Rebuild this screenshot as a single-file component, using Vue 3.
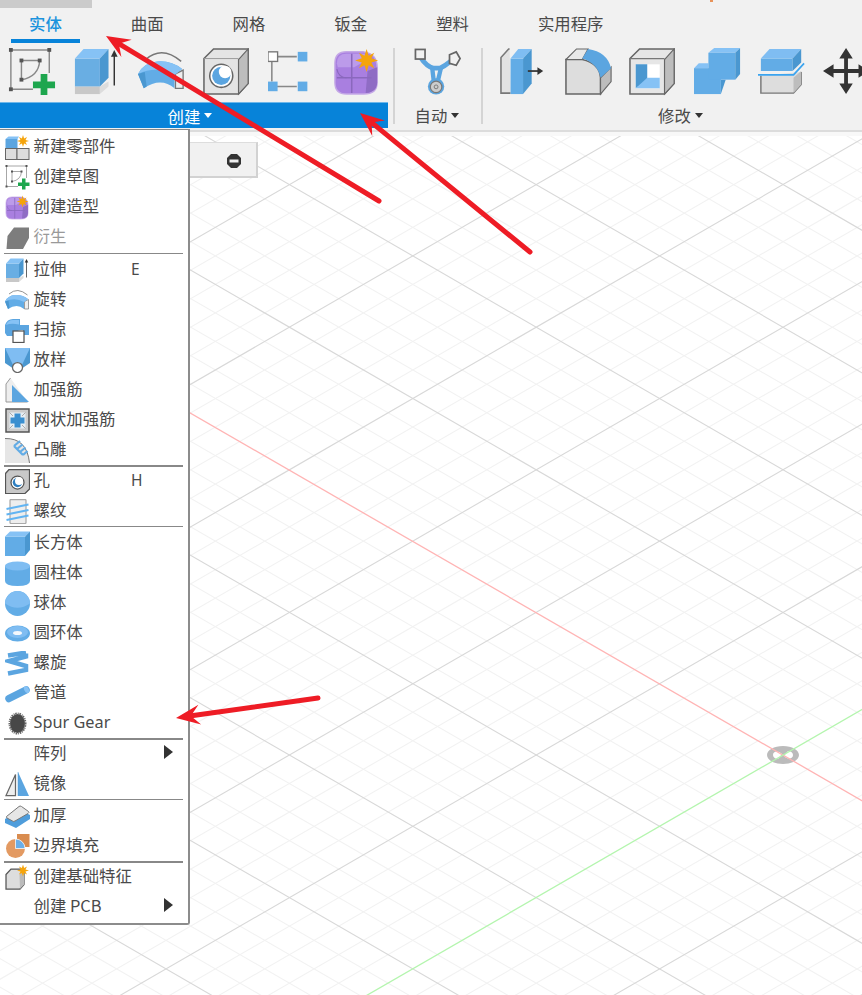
<template>
  <div class="app">
    <svg class="defs" width="0" height="0">
      <defs>
        <polygon id="star" points="0,-12 2.2,-5 8,-8 5,-2.2 12,0 5,2.2 8,8 2.2,5 0,12 -2.2,5 -8,8 -5,2.2 -12,0 -5,-2.2 -8,-8 -2.2,-5" fill="#f5a40c"/>
        <symbol id="sketch" viewBox="0 0 50 50">
          <path d="M3 2H43V26M3 2V43H26" fill="none" stroke="#8a8a8a" stroke-width="1.5"/>
          <path d="M14 13H33M14 13V33M33 13Q32 30 14 33" fill="none" stroke="#888" stroke-width="1.5"/>
          <g fill="#555"><rect x="1" y="0" width="4" height="4"/><rect x="41" y="0" width="4" height="4"/><rect x="1" y="41" width="4" height="4"/><rect x="12" y="11" width="4" height="4"/><rect x="31" y="11" width="4" height="4"/><rect x="12" y="31" width="4" height="4"/></g>
          <path d="M34 27h7v8h8v7h-8v7h-7v-7h-8v-7h8z" fill="#1ea64e"/>
        </symbol>
        <symbol id="extrude" viewBox="0 0 50 50">
          <path d="M2 40H28V48H2z" fill="#c8c8c8"/>
          <path d="M28 40L37 35V40L28 48z" fill="#dcdcdc"/>
          <path d="M2 11H28V40H2z" fill="#69aee3"/>
          <path d="M2 11L11 1H37L28 11z" fill="#86c2f5"/>
          <path d="M28 11L37 1V31L28 40z" fill="#4a97d0"/>
          <path d="M43 39V6" stroke="#333" stroke-width="1.5"/><path d="M43 2L46.500 9H39.500z" fill="#333"/>
        </symbol>
        <symbol id="revolve" viewBox="0 0 50 50">
          <path d="M8 12Q25 -3 45 14" fill="none" stroke="#777" stroke-width="1.6"/>
          <path d="M39 27L47 23V42H39z" fill="#eee" stroke="#777" stroke-width="1.4"/>
          <path d="M0 27Q6 15 20 14Q35 13 46 22L38 28V42Q24 30 6 42z" fill="#62ace6"/>
          <path d="M0 27Q6 15 20 14Q35 13 46 22L38 28Q20 18 0 27z" fill="#86c2f5"/>
          <path d="M0 27L6 42L9 40L7 25z" fill="#4a97d0"/>
        </symbol>
        <symbol id="hole" viewBox="0 0 50 50">
          <path d="M1 11L11 1H47V37L37 48H1z" fill="#e4e4e4" stroke="#666" stroke-width="1.6"/>
          <path d="M37 12L47 1V37L37 48z" fill="#bdbdbd" stroke="#666" stroke-width="1.2"/>
          <path d="M1 11H37" fill="none" stroke="#999" stroke-width="1"/>
          <circle cx="19" cy="29" r="12" fill="#fff" stroke="#666" stroke-width="1.6"/>
          <circle cx="19" cy="29" r="9.500" fill="#5ba5e0"/>
          <circle cx="23" cy="25" r="6.500" fill="#fff"/>
        </symbol>
        <symbol id="params" viewBox="0 0 50 50">
          <path d="M9 9H30M4 14V35M9 40H30" stroke="#888" stroke-width="1.6" fill="none"/>
          <rect x="0" y="4" width="10" height="10" fill="#fff" stroke="#777" stroke-width="1.4"/>
          <rect x="31" y="4" width="10" height="10" fill="#62ace6"/>
          <rect x="0" y="35" width="10" height="10" fill="#62ace6"/>
          <rect x="31" y="35" width="10" height="10" fill="#62ace6"/>
        </symbol>
        <symbol id="form" viewBox="-2 0 50 50">
          <path d="M0 16Q0 4 12 4H30Q44 6 44 20V36Q44 48 30 48H12Q0 48 0 36z" fill="#a97fe0" stroke="#c4a8e6" stroke-width="1.500"/>
          <path d="M2 16Q2 6 12 6H30Q34 6 38 10L20 20H3z" fill="#bc9bea"/>
          <path d="M34 24L44 20V36Q44 46 32 47z" fill="#8f6cc4"/>
          <path d="M17.500 6V47M2 31H38" stroke="#8a68bd" stroke-width="1.600"/>
          <path d="M2 22Q4 31 12 31" fill="none" stroke="#8a68bd" stroke-width="1.200"/>
          <use href="#star" x="33" y="13"/>
        </symbol>
        <symbol id="auto" viewBox="0 0 50 50">
          <path d="M7 10Q13 19 20 21H27Q32 19 38 14" fill="none" stroke="#5ba5e0" stroke-width="5"/>
          <path d="M19 21L21 38M28 21L24 38" fill="none" stroke="#5ba5e0" stroke-width="4.500"/>
          <rect x="1.500" y="1.500" width="10" height="10" fill="#f1f1f1" stroke="#666" stroke-width="1.800"/>
          <path d="M37 7L44 4L48 11L44 18L37 16z" fill="#f1f1f1" stroke="#666" stroke-width="1.800"/>
          <circle cx="23" cy="40" r="8.500" fill="#5ba5e0"/>
          <circle cx="23" cy="40.500" r="6" fill="#ccc" stroke="#777" stroke-width="1.200"/>
          <circle cx="23" cy="40.500" r="2" fill="none" stroke="#777" stroke-width="1"/>
        </symbol>
        <symbol id="press" viewBox="0 0 50 50">
          <path d="M10 1H9L1 10V47H11" fill="#e2e2e2" stroke="#777" stroke-width="1.600"/>
          <path d="M11 11H24V48H11z" fill="#62ace6"/>
          <path d="M11 11L19 1H33L24 11z" fill="#7fbdf2"/>
          <path d="M24 11L33 1V37L24 48z" fill="#4a97d0"/>
          <path d="M29 24H41" stroke="#333" stroke-width="1.800"/><path d="M45 24L39 20V28z" fill="#333"/>
        </symbol>
        <symbol id="fillet" viewBox="0 0 50 50">
          <path d="M1 48V12H18Q36 16 37 31V48z" fill="#ddd" stroke="#666" stroke-width="1.600"/>
          <path d="M1 12L12 1H24L18 12z" fill="#e8e8e8" stroke="#666" stroke-width="1.200"/>
          <path d="M37 31L48 20V35L37 48z" fill="#bdbdbd" stroke="#666" stroke-width="1.200"/>
          <path d="M18 11L24 1Q44 4 48 21L37 31Q34 16 18 11z" fill="#5ba5e0"/>
        </symbol>
        <symbol id="shell" viewBox="0 0 50 50">
          <path d="M1 11L11 1H47V37L37 48H1z" fill="#e6e6e6" stroke="#666" stroke-width="1.600"/>
          <path d="M37 12L47 1V37L37 48z" fill="#bdbdbd" stroke="#666" stroke-width="1.200"/>
          <path d="M1 11H37" stroke="#777" stroke-width="1.200"/>
          <rect x="7" y="17" width="25" height="25" fill="#fff"/>
          <path d="M7 17H19V33L7 42z" fill="#4a97d0"/>
          <path d="M7 42L19 31H32V42z" fill="#86c2f5"/>
        </symbol>
        <symbol id="combine" viewBox="0 0 50 50">
          <path d="M0 21L5 16H15V21z" fill="#86c2f5"/>
          <path d="M0 21H28V48H0z" fill="#62ace6"/>
          <path d="M28 33H33L28 48z" fill="#4a97d0"/>
          <path d="M15 5L21 0H48L43 5z" fill="#86c2f5"/>
          <path d="M15 5H43V33H15z" fill="#62ace6"/>
          <path d="M43 5L48 0V27L43 33z" fill="#4a97d0"/>
        </symbol>
        <symbol id="split" viewBox="0 0 50 50">
          <path d="M3 29V47H37L45 38V25" fill="#ddd" stroke="#777" stroke-width="1.500"/>
          <path d="M37 31L45 24V38L37 47z" fill="#bdbdbd"/>
          <path d="M3 11H36V24H3z" fill="#62ace6"/>
          <path d="M3 11L12 1H45L36 11z" fill="#7fbdf2"/>
          <path d="M36 11L45 1V15L36 24z" fill="#4a97d0"/>
          <path d="M0 28H37L48 16" fill="none" stroke="#3ba4ef" stroke-width="1.800"/>
        </symbol>
        <symbol id="move" viewBox="0 0 50 50">
          <path d="M24 0L31 11H26V22H37V17L48 24L37 31V26H26V37H31L24 48L17 37H22V26H11V31L0 24L11 17V22H22V11H17z" fill="#333"/>
        </symbol>
        <symbol id="comp" viewBox="0 0 50 50">
          <path d="M1 8H25V27H1z" fill="#5ba5e0"/><path d="M1 8L7 3H28L25 8z" fill="#86c2f5"/>
          <rect x="1" y="27" width="23" height="22" fill="#ddd" stroke="#666" stroke-width="2"/>
          <rect x="24" y="27" width="24" height="22" fill="#ddd" stroke="#666" stroke-width="2"/>
          <use href="#star" x="36" y="12"/>
        </symbol>
        <symbol id="derive" viewBox="0 0 50 50">
          <path d="M3 48L5 22L18 5H48V26L36 48z" fill="#7d7d7d"/>
        </symbol>
        <symbol id="sweep" viewBox="0 0 50 50">
          <path d="M0 30V14Q4 2 16 2H30V14H48V34H36V24Q22 22 16 36H4z" fill="#5ba5e0"/>
          <path d="M2 14Q6 4 16 4H28V13Q12 10 2 14z" fill="#86c2f5"/>
          <rect x="16" y="26" width="22" height="23" fill="#fff" stroke="#555" stroke-width="2.500"/>
        </symbol>
        <symbol id="loft" viewBox="0 0 50 50">
          <path d="M0 0H50V30L35 40H15L0 30z" fill="#4a97d0"/>
          <path d="M0 0H50L34 34H16z" fill="#7fbdf2"/>
          <circle cx="25" cy="39" r="10" fill="#fff" stroke="#666" stroke-width="2.500"/>
        </symbol>
        <symbol id="rib" viewBox="0 0 50 50">
          <path d="M11 0L2 12V48H45" fill="#eee" stroke="#999" stroke-width="2"/>
          <path d="M14 14L48 48H14z" fill="#5ba5e0"/>
        </symbol>
        <symbol id="web" viewBox="0 0 50 50">
          <rect x="2" y="2" width="46" height="46" fill="#ccc" stroke="#555" stroke-width="3"/>
          <rect x="9" y="9" width="32" height="32" fill="#e6eef4"/>
          <path d="M19 11H31V19H39V31H31V39H19V31H11V19H19z" fill="#3a8fd0"/>
          <path d="M9 9L16 16M41 9L34 16M9 41L16 34M41 41L34 34" stroke="#aaa" stroke-width="2"/>
        </symbol>
        <symbol id="emboss" viewBox="0 0 50 50">
          <path d="M0 1Q44 0 49 50H0z" fill="#e6e6e6"/>
          <path d="M0 1Q44 0 49 50" fill="none" stroke="#777" stroke-width="2"/>
          <path d="M18 16L30 6M18 16L36 34M24 22L35 13M30 28L41 19M36 34L45 26" stroke="#62ace6" stroke-width="4.500" fill="none"/>
        </symbol>
        <symbol id="hole2" viewBox="0 0 50 50">
          <path d="M8 1H49V40L40 49H1V9z" fill="#c8c8c8" stroke="#555" stroke-width="2.500"/>
          <circle cx="25" cy="27" r="13" fill="#fff" stroke="#555" stroke-width="2.500"/>
          <circle cx="25" cy="27" r="9.500" fill="#2f7fc0"/>
          <circle cx="28" cy="24" r="8" fill="#fff"/>
        </symbol>
        <symbol id="thread" viewBox="0 0 50 50">
          <rect x="10" y="1" width="32" height="48" rx="2" fill="#eee" stroke="#aaa" stroke-width="2.500"/>
          <path d="M3 20L47 11M3 31L47 22M3 42L47 33" stroke="#62b4f2" stroke-width="4"/>
        </symbol>
        <symbol id="box" viewBox="0 0 50 50">
          <path d="M0 11H40V50H0z" fill="#62ace6"/>
          <path d="M0 11L10 1H50L40 11z" fill="#86c2f5"/>
          <path d="M40 11L50 1V38L40 50z" fill="#4a97d0"/>
        </symbol>
        <symbol id="cyl" viewBox="0 0 50 50">
          <path d="M0 10V40Q0 50 25 50Q50 50 50 40V10z" fill="#62ace6"/>
          <ellipse cx="25" cy="10" rx="25" ry="9" fill="#7fbdf2"/>
        </symbol>
        <symbol id="sphere" viewBox="0 0 50 50">
          <circle cx="25" cy="25" r="25" fill="#62ace6"/>
          <path d="M0 25A25 25 0 0 1 50 25Q25 42 0 25z" fill="#7fbdf2"/>
        </symbol>
        <symbol id="torus" viewBox="0 0 50 50">
          <ellipse cx="25" cy="25" rx="25" ry="16" fill="#62ace6"/>
          <ellipse cx="25" cy="22" rx="21" ry="12" fill="#7fbdf2"/>
          <ellipse cx="25" cy="24" rx="9" ry="4" fill="#f4f8fc"/>
        </symbol>
        <symbol id="coil" viewBox="0 0 50 50">
          <path d="M6 9L42 3M42 5V11L8 20L42 30V38L6 45" fill="none" stroke="#5ba5e0" stroke-width="9"/>
        </symbol>
        <symbol id="pipe" viewBox="0 0 50 50">
          <path d="M8 35L42 18" stroke="#5ba5e0" stroke-width="15" stroke-linecap="round"/>
          <ellipse cx="43" cy="17" rx="4.500" ry="7.500" transform="rotate(-26 43 17)" fill="#86c2f5"/>
        </symbol>
        <symbol id="gear" viewBox="0 0 50 50">
          <ellipse cx="25" cy="25" rx="15" ry="19" fill="#484848"/>
          <ellipse cx="25" cy="25" rx="16" ry="20" fill="none" stroke="#666" stroke-width="4" stroke-dasharray="2 1.500 3 2"/>
        </symbol>
        <symbol id="mirror" viewBox="0 0 50 50">
          <path d="M21 5V47H2z" fill="#eee" stroke="#666" stroke-width="2.500"/>
          <path d="M26 0L48 48H26z" fill="#5ba5e0"/>
          <path d="M26 0V48" stroke="#4a97d0" stroke-width="1"/>
        </symbol>
        <symbol id="thicken" viewBox="0 0 50 50">
          <path d="M0 30L30 12L50 22V30L22 48L0 38z" fill="#4f9ddb"/>
          <path d="M3 25L28 5Q30 3 33 5L47 15Q49 17 46 19L20 34Q17 36 15 34L4 28Q2 26 3 25z" fill="#e6e6e6" stroke="#777" stroke-width="2"/>
        </symbol>
        <symbol id="boundary" viewBox="0 0 50 50">
          <path d="M24 0H49V26H24z" fill="#d98c4f"/>
          <circle cx="21" cy="29" r="19" fill="#e39a62"/>
          <path d="M21 29V10A19 19 0 0 1 40 29z" fill="#6aaee8" stroke="#fff" stroke-width="1.500"/>
        </symbol>
        <symbol id="base" viewBox="0 0 50 50">
          <path d="M2 19L12 8H38V39L30 48H2z" fill="#ddd" stroke="#555" stroke-width="2.500"/>
          <path d="M29 19L38 10V39L30 48z" fill="#bbb"/>
          <use href="#star" x="36" y="11"/>
        </symbol>
      </defs>
    </svg>

    <header class="toolbar">
      <div class="strip"><div class="strip-block"></div><div class="strip-dot"></div></div>
      <nav class="tabs">
        <div v-for="(t, i) in tabs" :key="t" class="tab" :class="{ active: i === 0 }">{{ t }}</div>
      </nav>
      <div class="groups">
        <section class="group create">
          <div class="tools">
            <svg v-for="x in createTools" :key="x" class="tool"><use :href="'#' + x" /></svg>
          </div>
          <div class="group-label">创建<i class="caret"></i></div>
        </section>
        <div class="vsep"></div>
        <section class="group auto">
          <div class="tools">
            <svg class="tool"><use href="#auto" /></svg>
          </div>
          <div class="group-label">自动<i class="caret"></i></div>
        </section>
        <div class="vsep"></div>
        <section class="group modify">
          <div class="tools">
            <svg v-for="x in modifyTools" :key="x" class="tool"><use :href="'#' + x" /></svg>
          </div>
          <div class="group-label">修改<i class="caret"></i></div>
        </section>
      </div>
    </header>

    <main class="stage">
      <svg class="grid" width="862" height="865" viewBox="0 130 862 865">
        <line v-for="(l, i) in gridLines" :key="i" :x1="l.x1" :y1="l.y1" :x2="l.x2" :y2="l.y2" :stroke="l.color" stroke-width="1.100" />
        <path d="M783 746C792 746 799 750 799 755C799 760 792 764 783 764C774 764 767 760 767 755C767 750 774 746 783 746zM782 754C778 750 773 751 773 755C773 757 775 759 778 759zM784 756C788 760 793 759 793 755C793 753 791 751 788 751z" fill="#bbb" fill-rule="evenodd" />
        <line x1="-1" y1="302.600" x2="1783" y2="1332.300" stroke="#ffb4b4" stroke-width="1.300" />
        <line x1="-217" y1="1332.300" x2="1567" y2="302.600" stroke="#b4f5ae" stroke-width="1.300" />
      </svg>
      <div class="browser-panel">
        <svg width="16" height="16" viewBox="0 0 16 16"><path d="M5 1H11L15 5V11L11 15H5L1 11V5z" fill="#333"/><rect x="3.500" y="6.500" width="9" height="3" fill="#eee"/></svg>
      </div>
    </main>

    <aside class="menu">
      <template v-for="(m, i) in menu" :key="i">
        <div v-if="m.sep" class="menu-sep" :class="m.sep"></div>
        <div v-else class="menu-row" :class="{ off: m.off }">
          <svg class="menu-icon"><use v-if="m.i" :href="'#' + m.i" /></svg>
          <span class="menu-text" :class="{ latin: m.latin }">{{ m.t }}</span>
          <span v-if="m.k" class="menu-key">{{ m.k }}</span>
          <i v-if="m.sub" class="menu-sub"></i>
        </div>
      </template>
    </aside>

    <svg class="arrows" width="862" height="995">
      <g v-for="(a, i) in arrows" :key="i">
        <line :x1="a.tx" :y1="a.ty" :x2="a.nx" :y2="a.ny" stroke="#ee1c25" stroke-width="5" stroke-linecap="round" />
        <polygon :points="a.head" fill="#ee1c25" />
      </g>
    </svg>
  </div>
</template>

<script setup>
const tabs = ["实体", "曲面", "网格", "钣金", "塑料", "实用程序"]
const createTools = ["sketch", "extrude", "revolve", "hole", "params", "form"]
const modifyTools = ["press", "fillet", "shell", "combine", "split", "move"]

const menu = [
  { t: "新建零部件", i: "comp" },
  { t: "创建草图", i: "sketch" },
  { t: "创建造型", i: "form" },
  { t: "衍生", i: "derive", off: true },
  { sep: "thin first" },
  { t: "拉伸", i: "extrude", k: "E" },
  { t: "旋转", i: "revolve" },
  { t: "扫掠", i: "sweep" },
  { t: "放样", i: "loft" },
  { t: "加强筋", i: "rib" },
  { t: "网状加强筋", i: "web" },
  { t: "凸雕", i: "emboss" },
  { sep: "thick" },
  { t: "孔", i: "hole2", k: "H" },
  { t: "螺纹", i: "thread" },
  { sep: "thin" },
  { t: "长方体", i: "box" },
  { t: "圆柱体", i: "cyl" },
  { t: "球体", i: "sphere" },
  { t: "圆环体", i: "torus" },
  { t: "螺旋", i: "coil" },
  { t: "管道", i: "pipe" },
  { t: "Spur Gear", i: "gear", latin: true },
  { sep: "thick" },
  { t: "阵列", sub: true },
  { t: "镜像", i: "mirror" },
  { sep: "thin" },
  { t: "加厚", i: "thicken" },
  { t: "边界填充", i: "boundary" },
  { sep: "thick" },
  { t: "创建基础特征", i: "base" },
  { t: "创建 PCB", sub: true },
]

// isometric grid around the origin marker, 5 minor cells per major cell
const ox = 783, oy = 755, dx = 123.4, dy = 71.3
const gridLines = []
for (const major of [false, true]) {
  for (let n = -90; n <= 90; n++) {
    if (n === 0 || (n % 5 === 0) !== major) continue
    const color = major ? "#d8d8d8" : "#f2f2f2"
    const px = ox + n * dx / 5
    const ay = oy - n * dy / 5, by = oy + n * dy / 5
    gridLines.push({ x1: px - 2000, y1: ay - 2000 * dy / dx, x2: px + 2000, y2: ay + 2000 * dy / dx, color })
    gridLines.push({ x1: px - 2000, y1: by + 2000 * dy / dx, x2: px + 2000, y2: by - 2000 * dy / dx, color })
  }
}

function arrow(tx, ty, hx, hy) {
  const len = Math.hypot(tx - hx, ty - hy)
  const ux = (tx - hx) / len, uy = (ty - hy) / len
  const px = -uy, py = ux
  const pt = (along, side) => `${hx + ux * along + px * side},${hy + uy * along + py * side}`
  return {
    tx, ty,
    nx: hx + ux * 12, ny: hy + uy * 12,
    head: [pt(0, 0), pt(24, 10), pt(15, 0), pt(24, -10)].join(" "),
  }
}
const arrows = [
  arrow(379, 201, 106, 36),
  arrow(530, 252, 360, 113),
  arrow(318, 698, 176, 718),
]
</script>

<style scoped>
.app {
  position: relative;
  width: 862px;
  height: 995px;
  overflow: hidden;
  display: flex;
  flex-direction: column;
  background: #fff;
  color: #4a4a4a;
  font-family: "Noto Sans CJK SC", "Liberation Sans", sans-serif;
  font-size: 16.4px;
}

.defs {
  position: absolute;
}

.toolbar {
  position: relative;
  z-index: 1;
  height: 132px;
  flex: none;
  background: #f1f1f1;
  border-bottom: 2px solid #dcdcdc;
  box-shadow: 0 4px 0 #f8f8f8;
  box-sizing: border-box;
}

.strip {
  height: 8px;
  position: relative;
}

.strip-block {
  width: 92px;
  height: 8px;
  background: #cbcbcb;
}

.strip-dot {
  position: absolute;
  left: 710px;
  top: 0;
  width: 3px;
  height: 2px;
  background: #e8935a;
}

.tabs {
  display: flex;
  gap: 33px;
  padding-left: 11px;
}

.tab {
  padding: 0 18px 1px;
  line-height: 30px;
  border-bottom: 4px solid transparent;
}

.tab.active {
  color: #1b93dd;
  font-weight: 500;
  border-bottom-color: #0783d9;
}

.groups {
  display: flex;
  margin-top: 5px;
}

.group {
  flex: none;
}

.create {
  width: 388px;
}

.auto {
  width: 86px;
}

.modify {
  flex: 1;
  min-width: 0;
}

.tools {
  display: flex;
  height: 49px;
  margin-bottom: 5px;
}

.create .tools {
  gap: 17px;
  padding-left: 8px;
}

.auto .tools {
  padding-left: 19px;
}

.modify .tools {
  gap: 16.500px;
  padding-left: 17px;
}

.tool {
  flex: none;
  width: 48px;
  height: 48px;
}

.group-label {
  height: 26px;
  line-height: 26px;
  display: flex;
  justify-content: center;
  align-items: center;
  gap: 4px;
}

.create .group-label {
  background: #0783d9;
  border-top: 1px solid #6db7ea;
  box-sizing: border-box;
  color: #fff;
  padding-right: 8px;
}

.auto .group-label {
  padding-right: 2px;
}

.modify .group-label {
  padding-left: 16px;
}

.caret {
  width: 0;
  height: 0;
  border-left: 4.500px solid transparent;
  border-right: 4.500px solid transparent;
  border-top: 5px solid #333;
}

.create .caret {
  border-top-color: #fff;
}

.vsep {
  flex: none;
  width: 2px;
  height: 76px;
  margin: 0 0 0 5px;
  background: #d4d4d4;
}

.auto + .vsep {
  margin-left: 0;
}

.stage {
  position: relative;
  flex: 1;
}

.grid {
  position: absolute;
  left: 0;
  top: -2px;
}

.browser-panel {
  position: absolute;
  left: 150px;
  top: 10px;
  width: 108px;
  height: 36px;
  box-sizing: border-box;
  padding: 10px 14px 0 0;
  display: flex;
  justify-content: flex-end;
  background: #f1f1f1;
  border-right: 2px solid #d2d2d2;
  border-bottom: 2px solid #d2d2d2;
  border-top: 1px solid #ddd;
}

.menu {
  position: absolute;
  z-index: 2;
  left: 0;
  top: 129px;
  width: 190px;
  height: 796px;
  box-sizing: border-box;
  padding-top: 1px;
  background: #fff;
  border-top: 1px solid #888;
  border-right: 2px solid #8c8c8c;
  border-bottom: 2px solid #8c8c8c;
  border-bottom-right-radius: 3px;
}

.menu-row {
  height: 30px;
  display: grid;
  grid-template-columns: 33.500px 97.500px 1fr;
  align-items: center;
  line-height: 30px;
}

.menu-row.off {
  color: #999;
}

.menu-icon {
  width: 25px;
  height: 25px;
  margin: 3px 0 0 5px;
}

.menu-text {
  white-space: nowrap;
  margin-top: -2px;
}

.menu-text.latin {
  font-family: "Noto Sans", "Liberation Sans", sans-serif;
  font-size: 16.300px;
  margin-top: 0;
}

.menu-key {
  font-family: "Noto Sans", "Liberation Sans", sans-serif;
  font-size: 15.500px;
  margin-top: 0;
}

.menu-sub {
  justify-self: start;
  margin: -2px 0 0 33px;
  width: 0;
  height: 0;
  border-top: 7.500px solid transparent;
  border-bottom: 7.500px solid transparent;
  border-left: 9px solid #333;
}

.menu-sep {
  margin-left: 4px;
  margin-right: 5px;
  background: #888;
}

.menu-sep.thin {
  height: 1px;
  margin-top: 1px;
}

.menu-sep.first {
  margin-top: 2px;
}

.menu-sep.thick {
  height: 2px;
  margin-top: 1px;
  margin-bottom: -2px;
}

.arrows {
  position: absolute;
  z-index: 3;
  left: 0;
  top: 0;
  pointer-events: none;
}
</style>
